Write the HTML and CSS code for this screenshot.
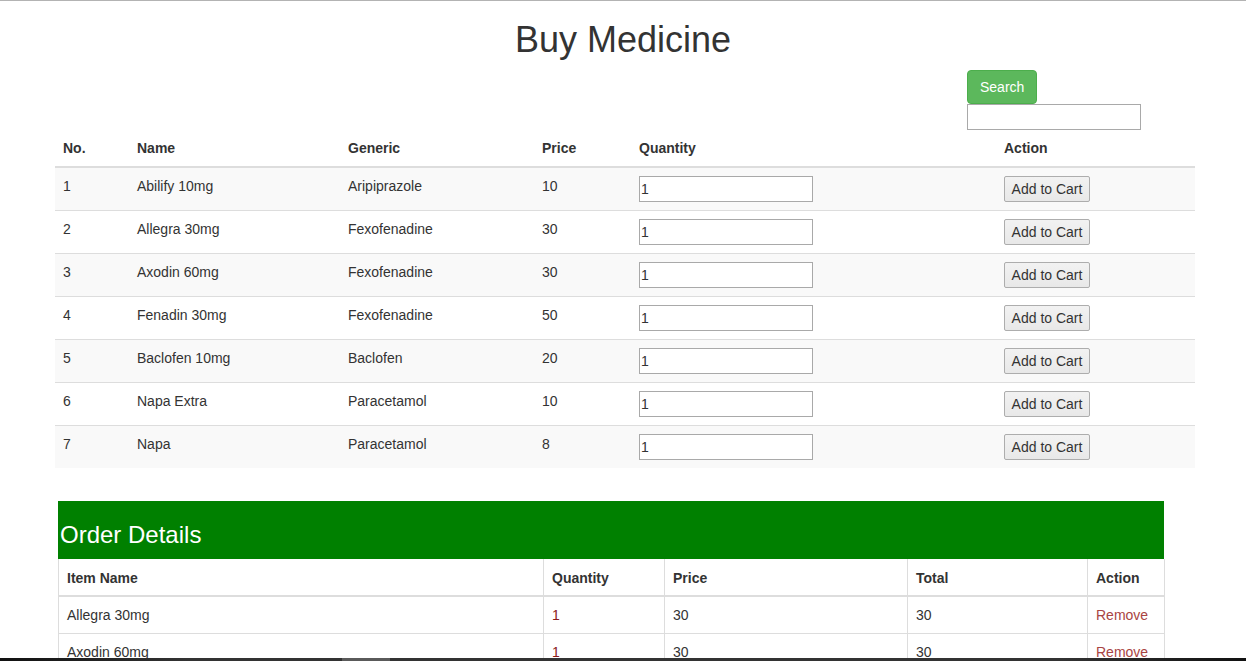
FILE: index.html
```html
<!DOCTYPE html>
<html>
<head>
<meta charset="utf-8">
<title>Buy Medicine</title>
<link rel="stylesheet" href="styles.css">
</head>
<body>
<h1 class="title">Buy Medicine</h1>
<div class="wrap">
  <div class="search">
    <button class="btn-search">Search</button>
    <input class="search-input" type="text">
  </div>
  <table class="meds">
    <colgroup>
      <col class="c-no"><col class="c-name"><col class="c-gen"><col class="c-price"><col class="c-qty"><col class="c-act">
    </colgroup>
    <thead>
      <tr><th>No.</th><th>Name</th><th>Generic</th><th>Price</th><th>Quantity</th><th>Action</th></tr>
    </thead>
    <tbody>
      <tr><td>1</td><td>Abilify 10mg</td><td>Aripiprazole</td><td>10</td><td><input class="qty" type="text" value="1"></td><td><button class="btn-cart">Add to Cart</button></td></tr>
      <tr><td>2</td><td>Allegra 30mg</td><td>Fexofenadine</td><td>30</td><td><input class="qty" type="text" value="1"></td><td><button class="btn-cart">Add to Cart</button></td></tr>
      <tr><td>3</td><td>Axodin 60mg</td><td>Fexofenadine</td><td>30</td><td><input class="qty" type="text" value="1"></td><td><button class="btn-cart">Add to Cart</button></td></tr>
      <tr><td>4</td><td>Fenadin 30mg</td><td>Fexofenadine</td><td>50</td><td><input class="qty" type="text" value="1"></td><td><button class="btn-cart">Add to Cart</button></td></tr>
      <tr><td>5</td><td>Baclofen 10mg</td><td>Baclofen</td><td>20</td><td><input class="qty" type="text" value="1"></td><td><button class="btn-cart">Add to Cart</button></td></tr>
      <tr><td>6</td><td>Napa Extra</td><td>Paracetamol</td><td>10</td><td><input class="qty" type="text" value="1"></td><td><button class="btn-cart">Add to Cart</button></td></tr>
      <tr><td>7</td><td>Napa</td><td>Paracetamol</td><td>8</td><td><input class="qty" type="text" value="1"></td><td><button class="btn-cart">Add to Cart</button></td></tr>
    </tbody>
  </table>
</div>

<section class="order">
  <h3 class="order-title">Order Details</h3>
  <table class="order-table">
    <colgroup>
      <col class="o-name"><col class="o-qty"><col class="o-price"><col class="o-total"><col class="o-act">
    </colgroup>
    <thead>
      <tr><th>Item Name</th><th>Quantity</th><th>Price</th><th>Total</th><th>Action</th></tr>
    </thead>
    <tbody>
      <tr><td>Allegra 30mg</td><td class="oqty">1</td><td>30</td><td>30</td><td><a class="remove" href="#">Remove</a></td></tr>
      <tr><td>Axodin 60mg</td><td class="oqty">1</td><td>30</td><td>30</td><td><a class="remove" href="#">Remove</a></td></tr>
    </tbody>
  </table>
</section>

<div class="scrollbar"><div class="thumb"></div></div>
</body>
</html>
```

FILE: styles.css
```css
html, body {
  margin: 0;
  padding: 0;
}

body {
  font-family: "Liberation Sans", Arial, sans-serif;
  font-size: 14px;
  line-height: 20px;
  color: #333;
  background: #fff;
  border-top: 1px solid #b3b3b3;
}

.title {
  margin: 19px 0 10px;
  font-size: 36px;
  font-weight: 500;
  line-height: 39.6px;
  text-align: center;
}

.wrap {
  width: 1140px;
  margin-left: 55px;
}

.search {
  margin-left: 912px;
  display: flex;
  flex-direction: column;
  align-items: flex-start;
}

.btn-search {
  width: 70px;
  height: 34px;
  box-sizing: border-box;
  margin: 0;
  padding: 6px 12px;
  background: #5cb85c;
  border: 1px solid #4cae4c;
  border-radius: 4px;
  color: #fff;
  font-family: "Liberation Sans", Arial, sans-serif;
  font-size: 14px;
  line-height: 20px;
}

.search-input {
  width: 174px;
  height: 26px;
  box-sizing: border-box;
  margin: 0;
  border: 1px solid #a9a9a9;
  padding: 1px 2px;
}

.meds {
  width: 1140px;
  border-collapse: collapse;
  border-spacing: 0;
  table-layout: fixed;
}

.c-no { width: 74px; }
.c-name { width: 211px; }
.c-gen { width: 194px; }
.c-price { width: 97px; }
.c-qty { width: 365px; }
.c-act { width: 199px; }

.meds th {
  text-align: left;
  font-weight: bold;
  padding: 8px;
  line-height: 20px;
  border-bottom: 2px solid #ddd;
  vertical-align: bottom;
}

.meds td {
  padding: 8px;
  line-height: 20px;
  border-top: 1px solid #ddd;
  vertical-align: top;
}

.meds tbody tr:nth-child(odd) {
  background: #f9f9f9;
}

.qty {
  display: block;
  width: 174px;
  height: 26px;
  box-sizing: border-box;
  margin: 0;
  padding: 1px 1px;
  border: 1px solid #a9a9a9;
  font-family: "Liberation Sans", Arial, sans-serif;
  font-size: 14px;
  color: #333;
  background: #fff;
}

.btn-cart {
  display: block;
  width: 86px;
  height: 26px;
  box-sizing: border-box;
  margin: 0;
  padding: 0 6px;
  background: linear-gradient(#f2f2f2, #e8e8e8);
  border: 1px solid #adadad;
  border-radius: 2px;
  font-family: "Liberation Sans", Arial, sans-serif;
  font-size: 14px;
  color: #333;
}

.order {
  width: 1106px;
  margin: 33px 0 0 58px;
}

.order-title {
  margin: 0;
  padding: 21px 2px 11px;
  background: #008000;
  color: #fff;
  font-size: 24px;
  font-weight: 500;
  line-height: 26px;
}

.order-table {
  width: 1106px;
  border-collapse: collapse;
  border-spacing: 0;
  table-layout: fixed;
  border: 1px solid #ddd;
  border-top: 0;
}

.o-name { width: 485px; }
.o-qty { width: 121px; }
.o-price { width: 243px; }
.o-total { width: 180px; }
.o-act { width: 77px; }

.order-table th,
.order-table td {
  padding: 8px;
  line-height: 20px;
  text-align: left;
  border: 1px solid #ddd;
  vertical-align: top;
}

.order-table thead th {
  padding: 9px 8px 7px;
  border-top: 0;
  border-bottom: 2px solid #ddd;
  font-weight: bold;
}

.oqty {
  color: #8b1a1a;
}

.remove {
  color: #a94442;
  text-decoration: none;
}

.scrollbar {
  position: fixed;
  left: 0;
  right: 0;
  bottom: 0;
  height: 3px;
  background: linear-gradient(to right, #111 0%, #333 15%, #333 85%, #111 100%);
}

.scrollbar .thumb {
  position: absolute;
  left: 342px;
  top: 0;
  width: 48px;
  height: 3px;
  background: #5a5a5a;
}
```
